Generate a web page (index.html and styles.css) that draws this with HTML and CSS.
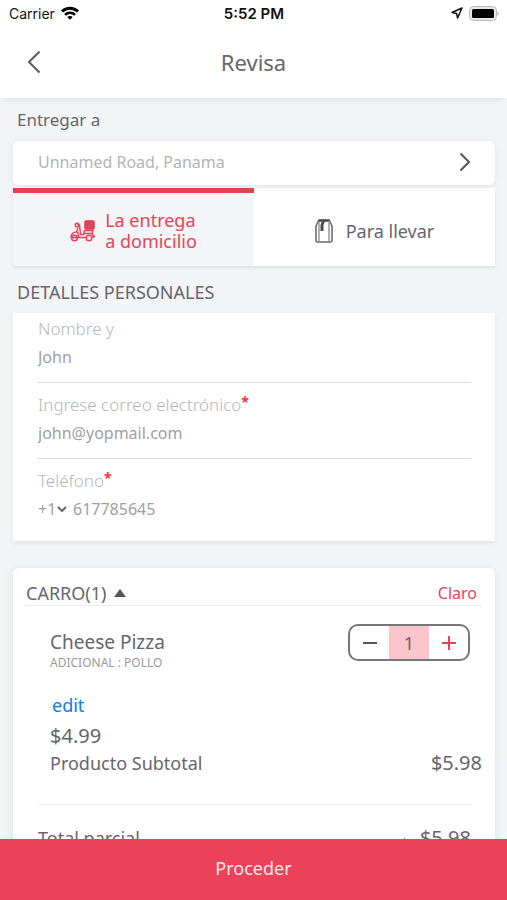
FILE: index.html
```html
<!DOCTYPE html>
<html lang="es">
    <head>
        <meta charset="UTF-8">
        <meta name="viewport" content="width=device-width, initial-scale=1.0">
        <title>Revisa</title>
        <link rel="stylesheet" href="styles.css">
    </head>
    <body>
        <div class="status">
            <div class="status-left">
                <span>Carrier</span>
                <svg width="18" height="14" viewBox="0 0 18 14" fill="none" stroke="#000" stroke-width="3">
                    <path d="M1 5.5C5.5 1 12.500 1 17 5.500"/>
                    <path d="M4 8.800C6.800 6 11.200 6 14 8.800" stroke-width="2.500"/>
                    <path d="M6.300 11C7.800 9.500 10.200 9.500 11.700 11L9 13.800Z" fill="#000" stroke="none"/>
                </svg>
            </div>
            <strong>5:52 PM</strong>
            <div class="status-right">
                <svg width="12" height="12" viewBox="0 0 12 12" fill="none" stroke="#111" stroke-width="1.500" stroke-linejoin="round">
                    <path d="M11 1L1 5.500L5.600 6.400L6.600 11Z"/>
                </svg>
                <svg width="30" height="15" viewBox="0 0 30 15">
                    <rect x="0.500" y="0.500" width="27" height="14" rx="4" fill="#e6e6e4" stroke="#bbb"/>
                    <rect x="3" y="3" width="22" height="9" rx="1.500" fill="#000"/>
                    <path d="M28.500 5Q31 7.500 28.500 10Z" fill="#aaa"/>
                </svg>
            </div>
        </div>
        <header class="header">
            <button class="back" aria-label="Atrás">
                <svg width="14" height="24" viewBox="0 0 14 24" fill="none" stroke="#5a5a62" stroke-width="2">
                    <path d="M12.500 1.500L2 12L12.500 22.500"/>
                </svg>
            </button>
            <h1>Revisa</h1>
        </header>
        <main>
            <h2>Entregar a</h2>
            <button class="address">
                <span>Unnamed Road, Panama</span>
                <svg width="12" height="20" viewBox="0 0 12 20" fill="none" stroke="#55555c" stroke-width="2">
                    <path d="M1.500 1.500L10 10L1.500 18.500"/>
                </svg>
            </button>
            <div class="tabs">
                <button class="tab active">
                    <svg width="26" height="22" viewBox="0 0 26 22" fill="none" stroke="#eb4259" stroke-width="1.500" stroke-linejoin="round">
                        <rect x="15" y="1" width="9" height="8" rx="1" fill="#eb4259" stroke="#d93a50"/>
                        <path d="M7 3.500L9.500 5L10.500 14.500H13.500L14.500 10.500H23L22 13.500L24.500 17H21.500"/>
                        <circle cx="7" cy="5" r="1.800"/>
                        <path d="M8 8L6.500 12C3 12 1 14.500 1 17.500H16"/>
                        <path d="M7.500 11.500L9 17.500M14 13.500H23"/>
                        <circle cx="4.500" cy="18" r="2.800"/>
                        <circle cx="19" cy="18" r="2.800"/>
                    </svg>
                    <span>La entrega<br>a domicilio</span>
                </button>
                <button class="tab">
                    <svg width="18" height="24" viewBox="0 0 18 24" fill="none" stroke="#66666c" stroke-width="1.500" stroke-linejoin="round">
                        <path d="M3.500 1.500H14.500L17 7V21.500Q17 23 15.500 23H2.500Q1 23 1 21.500V7Z"/>
                        <path d="M3.500 1.500H14.500" stroke="#4a4a50" stroke-width="2.500"/>
                        <path d="M4 3V22.500M14 2V22.500" stroke="#99999e"/>
                        <path d="M7 2H10L8.500 6V12H5.500V6Z" fill="#4a4a50" stroke="none"/>
                    </svg>
                    <span>Para llevar</span>
                </button>
            </div>
            <h2 class="caps">DETALLES PERSONALES</h2>
            <form class="details">
                <div class="field">
                    <label for="name">Nombre y</label>
                    <input id="name" type="text" value="John">
                </div>
                <div class="field">
                    <label for="email">Ingrese correo electrónico<sup>*</sup></label>
                    <input id="email" type="email" value="john@yopmail.com">
                </div>
                <div class="field">
                    <label for="phone">Teléfono<sup>*</sup></label>
                    <div class="phone">
                        <select aria-label="Código de país">
                            <option>+1</option>
                        </select>
                        <svg width="10" height="6" viewBox="0 0 10 6" fill="none" stroke="#66666c" stroke-width="2">
                            <path d="M1 1L5 5L9 1"/>
                        </svg>
                        <input id="phone" type="tel" value="617785645">
                    </div>
                </div>
            </form>
            <section class="cart">
                <div class="cart-head">
                    <button class="toggle">
                        CARRO(1)
                        <svg width="12" height="8" viewBox="0 0 12 8"><path d="M6 0L12 8H0Z" fill="#55555c"/></svg>
                    </button>
                    <button class="clear">Claro</button>
                </div>
                <div class="item">
                    <div class="item-top">
                        <div>
                            <h3>Cheese Pizza</h3>
                            <p class="addon">ADICIONAL : POLLO</p>
                        </div>
                        <div class="stepper">
                            <button aria-label="Quitar">
                                <svg width="16" height="16" viewBox="0 0 16 16" stroke="#55555c" stroke-width="2"><path d="M1 8H15"/></svg>
                            </button>
                            <span>1</span>
                            <button aria-label="Añadir">
                                <svg width="16" height="16" viewBox="0 0 16 16" stroke="#eb4259" stroke-width="2"><path d="M1 8H15M8 1V15"/></svg>
                            </button>
                        </div>
                    </div>
                    <a class="edit" href="#">edit</a>
                    <p class="price">$4.99</p>
                    <p class="row"><span>Producto Subtotal</span><span class="amount">$5.98</span></p>
                </div>
                <div class="totals">
                    <p class="row"><span>Total parcial</span><span class="amount"><small>+</small>$5.98</span></p>
                </div>
            </section>
        </main>
        <button class="proceed">Proceder</button>
    </body>
</html>
```

FILE: styles.css
```css
* {
    box-sizing: border-box;
}
body {
    background: #f3f4f6;
    color: #66666c;
    display: flex;
    flex-direction: column;
    font-family: "Noto Sans", sans-serif;
    font-size: 18px;
    height: 100vh;
    margin: 0;
}
h1, h2, h3, p {
    font-weight: normal;
    margin: 0;
}
button, input, select {
    background: none;
    border: 0;
    color: inherit;
    font: inherit;
    margin: 0;
    padding: 0;
}
button {
    cursor: pointer;
}
svg {
    display: block;
    flex: none;
}
.status {
    align-items: center;
    background: white;
    color: #111;
    display: grid;
    flex: none;
    font-family: Inter, sans-serif;
    font-size: 14px;
    grid-template-columns: 1fr auto 1fr;
    height: 28px;
    padding: 0 8px 2px 9px;
}
.status strong {
    font-size: 15px;
    font-weight: 600;
}
.status-left, .status-right {
    align-items: center;
    display: flex;
    gap: 6px;
}
.status-right {
    justify-content: flex-end;
}
.header {
    align-items: center;
    background: white;
    box-shadow: 0 6px 6px -4px #e2e3e5;
    display: grid;
    flex: none;
    grid-template-columns: 40px 1fr 40px;
    height: 70px;
    padding: 0 14px 2px;
    z-index: 1;
}
.back {
    display: flex;
    justify-content: center;
    padding: 8px 0;
}
h1 {
    font-size: 22px;
    text-align: center;
}
main {
    flex: 1;
    overflow-y: auto;
    padding: 10px 12px 0 13px;
    scrollbar-width: none;
}
h2 {
    font-size: 17px;
    line-height: 24px;
    padding: 0 4px;
}
h2.caps {
    font-size: 18px;
}
.address {
    align-items: center;
    background: white;
    border-radius: 6px;
    box-shadow: 0 1px 6px #e2e3e5;
    color: #b3b3b6;
    display: flex;
    font-size: 16px;
    height: 44px;
    justify-content: space-between;
    margin: 9px 0 3px;
    padding: 0 24px 2px 25px;
    width: 100%;
}
.tabs {
    background: white;
    box-shadow: 0 2px 3px #dedfe1;
    display: grid;
    grid-template-columns: 1fr 1fr;
    height: 78px;
    margin-bottom: 14px;
}
.tab {
    align-items: center;
    display: flex;
    font-size: 18px;
    gap: 13px;
    justify-content: center;
    line-height: 21px;
    padding-top: 8px;
    text-align: left;
}
.tab.active {
    background: #f3f5f7;
    border-top: 5px solid #e33f55;
    color: #eb4259;
    gap: 9px;
    padding-top: 3px;
}
.details {
    background: white;
    box-shadow: 0 2px 4px #e2e3e5;
    margin: 9px 0 27px;
    padding: 0 24px 0 25px;
}
.field {
    border-bottom: 1px solid #dcdcde;
    font-size: 16px;
    padding: 10px 0 9px;
}
.field:first-child {
    padding-top: 4px;
}
.field:last-child {
    border-bottom: 0;
    padding-bottom: 16px;
}
.field label {
    color: #b6b6b9;
    display: block;
    font-size: 17px;
    font-weight: 300;
    line-height: 24px;
}
.field sup {
    color: #f33;
    font-size: 14px;
    font-weight: bold;
    line-height: 0;
    vertical-align: 4px;
}
.field input, .field select {
    color: #a0a0a3;
    height: 32px;
}
.field input {
    display: block;
    width: 100%;
}
.phone {
    align-items: center;
    display: flex;
}
.phone select {
    appearance: none;
}
.phone svg {
    margin-right: 6px;
}
.cart {
    background: white;
    border-radius: 6px 6px 0 0;
    box-shadow: 0 1px 8px #dfe0e2;
}
.cart-head {
    border-bottom: 1px solid #ececee;
    display: flex;
    justify-content: space-between;
    line-height: 24px;
    margin: 0 13px;
    padding: 13px 5px 0 0;
}
.toggle {
    align-items: center;
    display: flex;
    font-size: 18px;
    gap: 8px;
}
.clear {
    color: #eb4259;
    font-size: 16px;
}
.item {
    padding: 18px 13px 28px 37px;
}
.item-top {
    align-items: flex-start;
    display: flex;
    justify-content: space-between;
    padding-right: 12px;
}
h3 {
    font-size: 19px;
    line-height: 26px;
    padding-top: 5px;
}
.addon {
    color: #99999c;
    font-size: 12px;
    line-height: 16px;
}
.stepper {
    border: 2px solid #77777b;
    border-radius: 10px;
    display: grid;
    grid-template-columns: 39px 40px 39px;
    height: 37px;
    overflow: hidden;
}
.stepper button, .stepper span {
    align-items: center;
    display: flex;
    justify-content: center;
}
.stepper span {
    background: #f9c4cb;
}
.edit {
    color: #0a7aff;
    display: inline-block;
    line-height: 28px;
    margin: 20px 0 3px 2px;
    text-decoration: none;
}
.price, .amount {
    font-size: 20px;
}
.price {
    line-height: 28px;
}
.row {
    display: flex;
    justify-content: space-between;
    line-height: 26px;
}
.row small {
    font-size: 12px;
    margin-right: 12px;
}
.totals {
    border-top: 1px solid #f0f0f1;
    margin: 0 24px 0 25px;
    padding: 20px 0;
}
.proceed {
    background: #eb4259;
    color: #fde8ea;
    flex: none;
    font-size: 18px;
    height: 61px;
    padding-bottom: 3px;
    z-index: 1;
}
```
